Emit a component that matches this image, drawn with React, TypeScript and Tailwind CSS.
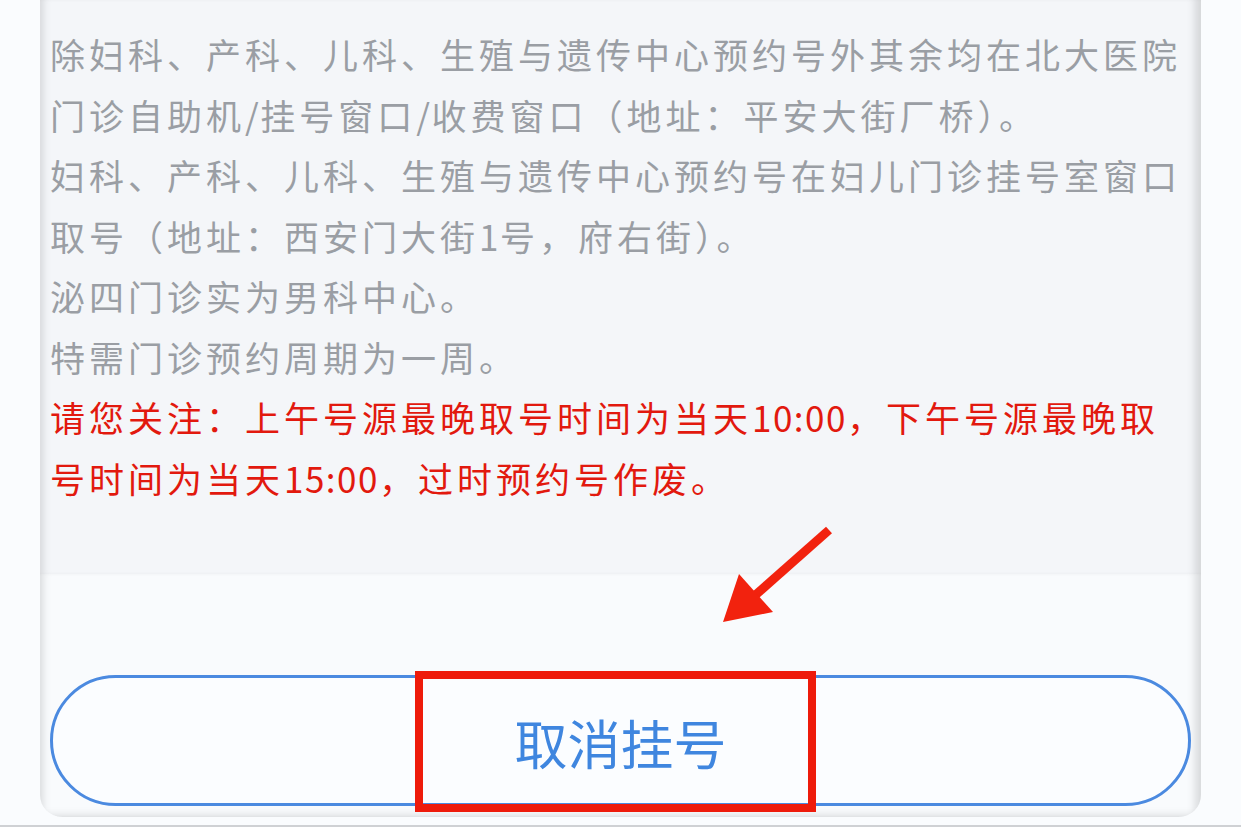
import React from "react";

const Half = ({ children }: { children: React.ReactNode }) => (
  <span className="tracking-[1.5px]">{children}</span>
);

export default function App() {
  return (
    <div className="relative w-[1241px] h-[827px] overflow-hidden bg-[#fafcfe] flex flex-col font-['Noto_Sans_CJK_SC','Noto_Sans',sans-serif]">
      <div className="mx-[40px] h-[817px] rounded-b-[22px] overflow-hidden flex flex-col">
        <div className="h-[574px] bg-[#f4f6f9] px-[10px] pt-[24px] text-[35px] leading-[60.5px] tracking-[4px] text-[#9a9ea4] shadow-[inset_9px_0_8px_-6px_rgba(0,0,0,0.13),inset_-12px_0_8px_-6px_rgba(0,0,0,0.13)]">
          <p>
            除妇科、产科、儿科、生殖与遗传中心预约号外其余均在北大医院门诊自助机<Half>/</Half>挂号窗口<Half>/</Half>收费窗口（地址：平安大街厂桥）。
          </p>
          <p>
            妇科、产科、儿科、生殖与遗传中心预约号在妇儿门诊挂号室窗口取号（地址：西安门大街<Half>1</Half>号，府右街）。
          </p>
          <p>泌四门诊实为男科中心。</p>
          <p>特需门诊预约周期为一周。</p>
          <p className="text-[#e2190e]">
            请您关注：上午号源最晚取号时间为当天<Half>10:00</Half>，下午号源最晚取号时间为当天<Half>15:00</Half>，过时预约号作废。
          </p>
        </div>
        <div className="flex-1 bg-[#f9fbfd] px-[10px] pt-[101px] pb-[11px] shadow-[inset_9px_0_8px_-6px_rgba(0,0,0,0.13),inset_-12px_0_8px_-6px_rgba(0,0,0,0.13),inset_0_-8px_8px_-6px_rgba(0,0,0,0.12)]">
          <button className="w-full h-[131px] rounded-full border-[3px] border-[#4b8ae0] bg-[#fbfdff] flex items-center justify-center pt-[4px] text-[53px] text-[#3f86df] font-['Noto_Sans_CJK_SC','Noto_Sans',sans-serif]">
            取消挂号
          </button>
        </div>
      </div>
      <div className="mt-[8px] h-[2px] bg-[#cfd1d4]" />

      {/* annotation: red box */}
      <div className="absolute left-[415px] top-[671px] w-[401px] h-[141px] border-[8px] border-[#ee1b0b] pointer-events-none" />
      {/* annotation: arrow */}
      <svg
        className="absolute left-0 top-0 pointer-events-none"
        width="1241"
        height="827"
        viewBox="0 0 1241 827"
      >
        <line x1="829" y1="530" x2="752" y2="598" stroke="#f2220e" strokeWidth="9" />
        <polygon points="723,622 739,574 773,612" fill="#f2220e" />
      </svg>
    </div>
  );
}
